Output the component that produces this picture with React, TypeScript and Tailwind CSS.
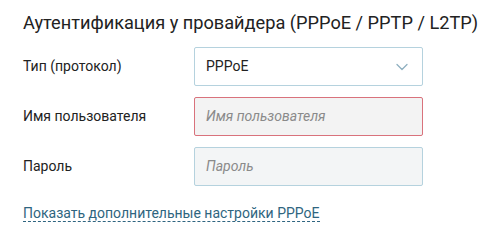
import React from 'react';

const font = { fontFamily: 'Roboto, "Noto Sans", sans-serif' };

const Chevron = () => (
  <svg width="12" height="8" viewBox="0 0 12 8" fill="none">
    <path d="M1 1.5l5 5 5-5" stroke="#8fb0c0" strokeWidth="1.3" strokeLinecap="round" strokeLinejoin="round" />
  </svg>
);

const Row = ({ label, children }: { label: string; children: React.ReactNode }) => (
  <div className="flex items-center">
    <div className="w-[171px] text-[14px] text-[#222]">{label}</div>
    {children}
  </div>
);

export default function App() {
  return (
    <div className="w-[500px] h-[230px] bg-white pl-[23px] pt-[11px]" style={font}>
      <h1 className="text-[18.2px] leading-[24px] text-[#222] font-normal">
        Аутентификация у провайдера (PPPoE / PPTP / L2TP)
      </h1>
      <div className="mt-[12px] flex flex-col gap-[11px]">
        <Row label="Тип (протокол)">
          <div className="w-[229px] h-[39px] border border-[#b5d2de] rounded-[2px] bg-white flex items-center justify-between pl-[11px] pr-[14px] text-[14px] text-[#222]">
            <span>PPPoE</span>
            <Chevron />
          </div>
        </Row>
        <Row label="Имя пользователя">
          <div className="w-[229px] h-[39px] border border-[#d9727c] rounded-[2px] bg-[#f3f3f3] flex items-center pl-[11px] text-[14px] italic text-[#8a8a8a]">
            Имя пользователя
          </div>
        </Row>
        <Row label="Пароль">
          <div className="w-[229px] h-[39px] border border-[#b5d2de] rounded-[2px] bg-[#f3f5f6] flex items-center pl-[11px] text-[14px] italic text-[#8a8a8a]">
            Пароль
          </div>
        </Row>
      </div>
      <div className="mt-[15px]">
        <span className="text-[14px] text-[#2f6580] border-b border-dashed border-[#2f6580] leading-[17px]">
          Показать дополнительные настройки PPPoE
        </span>
      </div>
    </div>
  );
}
